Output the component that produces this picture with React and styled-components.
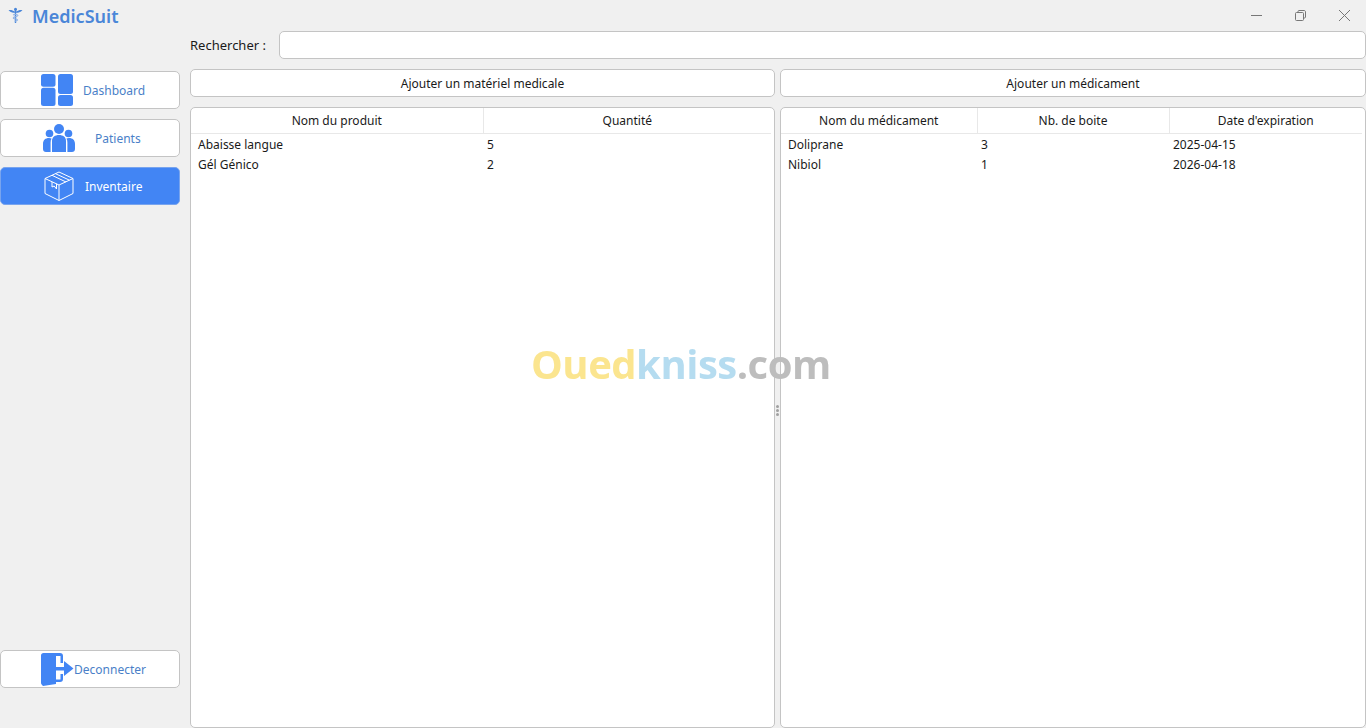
import React from "react";
import styled, { createGlobalStyle } from "styled-components";

const GlobalStyle = createGlobalStyle`
  html, body { margin: 0; padding: 0; height: 100%; overflow: hidden; }
  body { background: #f0f0f0; font-family: "Noto Sans", "Open Sans", sans-serif; color: #1a1a1a; }
  * { box-sizing: border-box; }
`;

const Window = styled.div`
  position: relative;
  width: 1366px;
  height: 728px;
  display: flex;
  flex-direction: column;
  overflow: hidden;
`;

const TitleBar = styled.div`
  height: 31px;
  flex: none;
  display: flex;
  align-items: center;
  justify-content: space-between;
  padding-left: 8px;
`;

const Brand = styled.div`
  display: flex;
  align-items: center;
  gap: 9px;
  color: #4a86d8;
  font-size: 18px;
  font-weight: 600;
`;

const WindowControls = styled.div`
  display: flex;
  padding-right: 0;
`;

const WindowButton = styled.button`
  width: 44px;
  height: 30px;
  border: 0;
  padding: 0;
  background: none;
  display: flex;
  align-items: center;
  justify-content: center;
`;

const Body = styled.div`
  flex: 1;
  min-height: 0;
  display: grid;
  grid-template-columns: 180px 1fr;
  column-gap: 10px;
`;

const Sidebar = styled.nav`
  display: flex;
  flex-direction: column;
  gap: 10px;
  padding: 40px 0 40px;
`;

const NavButton = styled.button`
  height: 38px;
  width: 180px;
  flex: none;
  margin-top: ${(p) => (p.$bottom ? "auto" : "0")};
  display: flex;
  align-items: center;
  padding: 0 0 0 ${(p) => p.$inset}px;
  gap: ${(p) => p.$gap}px;
  border-radius: 5px;
  border: 1px solid ${(p) => (p.$active ? "#78a4ee" : "#c4c4c4")};
  background: ${(p) => (p.$active ? "#4285f4" : "#fff")};
  color: ${(p) => (p.$active ? "#fff" : "#4a7fc8")};
  font: 12px "Noto Sans", sans-serif;
`;

const Main = styled.main`
  display: flex;
  flex-direction: column;
  min-width: 0;
`;

const SearchRow = styled.div`
  height: 28px;
  flex: none;
  display: flex;
  align-items: center;
  gap: 13px;
  margin-bottom: 10px;
  font-size: 13px;
`;

const SearchInput = styled.input`
  flex: 1;
  height: 28px;
  border: 1px solid #c4c4c4;
  border-radius: 5px;
  background: #fff;
`;

const Split = styled.div`
  flex: 1;
  min-height: 0;
  display: grid;
  grid-template-columns: 585px 5px 586px;
`;

const Column = styled.section`
  display: flex;
  flex-direction: column;
  gap: 10px;
  min-height: 0;
`;

const AddButton = styled.button`
  height: 28px;
  flex: none;
  border: 1px solid #c4c4c4;
  border-radius: 5px;
  background: #fff;
  color: #1a1a1a;
  font: 12px "Noto Sans", sans-serif;
`;

const TablePanel = styled.div`
  flex: 1;
  background: #fff;
  border: 1px solid #c4c4c4;
  border-radius: 5px;
  padding: 0 3px 0 0;
`;

const Table = styled.table`
  width: 100%;
  border-collapse: collapse;
  table-layout: fixed;
  font-size: 12px;
`;

const HeadCell = styled.th`
  width: ${(p) => p.$width}px;
  height: 25px;
  padding: 0;
  font-weight: 400;
  text-align: center;
  border-bottom: 1px solid #e8e8e8;
  border-right: 1px solid #e8e8e8;
  &:last-child { border-right: 0; }
`;

const Cell = styled.td`
  height: 20px;
  padding: 0 0 0 7px;
  &:not(:first-child) { padding-left: 4px; }
`;

const FirstRowSpacer = styled.tr`
  height: 1px;
`;

const Splitter = styled.div`
  display: flex;
  flex-direction: column;
  align-items: center;
  justify-content: center;
  gap: 1px;
  padding-top: 24px;
`;

const SplitterDot = styled.span`
  width: 3px;
  height: 3px;
  border-radius: 50%;
  background: #a0a0a0;
`;

// stock-photo style stamp laid over the whole window
const Watermark = styled.div`
  position: absolute;
  left: 531px;
  top: 339px;
  font: 700 40px/50px "Open Sans", sans-serif;
  letter-spacing: -0.5px;
  pointer-events: none;
  filter: blur(0.7px);
`;

const Mark = styled.span`
  color: ${(p) => p.$color};
`;

const CaduceusIcon = () => (
  <svg width="15" height="17" viewBox="0 0 15 17" fill="none">
    <path d="M0.5 3 C3 2.6 5 3.2 6.8 4.6 L8.2 4.6 C10 3.2 12 2.6 14.5 3 C12.6 5.4 10.4 5.8 8.2 5.8 L6.8 5.8 C4.6 5.8 2.4 5.4 0.5 3Z" fill="#4a86d8" />
    <circle cx="7.5" cy="2.2" r="1.5" fill="#4a86d8" />
    <path d="M7.5 3 V16" stroke="#4a86d8" strokeWidth="1.4" />
    <path d="M5 8 C7 7 9.6 7.4 10 8.4 C10.2 9.6 5.4 9.6 5.2 11 C5.2 12.2 9.6 11.6 9.6 13 C9.4 14 7.6 14 6.6 14.2" stroke="#8fb3e6" strokeWidth="1.1" />
  </svg>
);

const DashboardIcon = () => (
  <svg width="32" height="32" viewBox="0 0 32 32" fill="#4285f4">
    <rect x="0" y="0" width="14.5" height="12.8" rx="2.5" />
    <rect x="0" y="13.8" width="14.5" height="18.2" rx="2.5" />
    <rect x="17" y="0" width="15" height="20" rx="2.5" />
    <rect x="17" y="21" width="15" height="11" rx="2.5" />
  </svg>
);

const PatientsIcon = () => (
  <svg width="32" height="28" viewBox="0 0 32 28" fill="#4285f4">
    <circle cx="16" cy="5" r="5" />
    <circle cx="6.5" cy="9.5" r="3.8" />
    <circle cx="25.5" cy="9.5" r="3.8" />
    <path d="M9 28 V17 C9 13 12 11 16 11 C20 11 23 13 23 17 V28 Z" />
    <path d="M7.6 28 H3 C1.2 28 0 26.8 0 25 V20 C0 16 2.4 14 6 14 C7 14 8 14.2 8.6 14.6 C7.9 15.8 7.6 17 7.6 18.4 Z" />
    <path d="M24.4 28 H29 C30.8 28 32 26.8 32 25 V20 C32 16 29.6 14 26 14 C25 14 24 14.2 23.4 14.6 C24.1 15.8 24.4 17 24.4 18.4 Z" />
  </svg>
);

const BoxIcon = () => (
  <svg width="30" height="30" viewBox="0 0 30 30" fill="none" stroke="#fff" strokeWidth="1" strokeLinejoin="round">
    <path d="M15 1 L29 7.5 V22.5 L15 29.5 L1 22.5 V7.5 Z" />
    <path d="M1 7.5 L15 14 L29 7.5" />
    <path d="M15 14 V29.5" />
    <path d="M8 4.3 L22 11 M11.5 2.7 L25.5 9.2" />
    <path d="M8 11 V16 L10.2 15 L12.5 18 V12.8" />
  </svg>
);

const LogoutIcon = () => (
  <svg width="33" height="33" viewBox="0 0 33 33" fill="#4285f4">
    <path d="M0 2.5 C0 1 1 0 2.5 0 H19 C21 0 22 1 22 3 V10 H19.5 V3 H15 V31 L2 33 C1 32 0 31 0 30 Z" />
    <path d="M19.5 21 H22 V26 C22 28 21 29 19 29 H15 V26.5 H19.5 Z" />
    <path d="M15 14 H23 V8 L32.5 15.5 L23 23 V17.5 H15 Z" />
  </svg>
);

const materiel = [
  ["Abaisse langue", "5"],
  ["Gél Génico", "2"],
];

const medicaments = [
  ["Doliprane", "3", "2025-04-15"],
  ["Nibiol", "1", "2026-04-18"],
];

function DataTable({ columns, rows }) {
  return (
    <Table>
      <thead>
        <tr>
          {columns.map((c) => (
            <HeadCell key={c.label} $width={c.width}>{c.label}</HeadCell>
          ))}
        </tr>
        <FirstRowSpacer />
      </thead>
      <tbody>
        {rows.map((r) => (
          <tr key={r[0]}>
            {r.map((v) => (
              <Cell key={v}>{v}</Cell>
            ))}
          </tr>
        ))}
      </tbody>
    </Table>
  );
}

export default function App() {
  return (
    <Window>
      <GlobalStyle />
      <TitleBar>
        <Brand>
          <CaduceusIcon />
          MedicSuit
        </Brand>
        <WindowControls>
          <WindowButton>
            <svg width="11" height="11" viewBox="0 0 11 11"><path d="M0 5.5 H11" stroke="#777" /></svg>
          </WindowButton>
          <WindowButton>
            <svg width="11" height="11" viewBox="0 0 11 11" fill="none" stroke="#777">
              <rect x="0.5" y="2.5" width="8" height="8" rx="1" />
              <path d="M3 2.5 V1.5 C3 1 3.4 0.5 4 0.5 H9 C10 0.5 10.5 1 10.5 2 V7 C10.5 7.6 10 8 9.5 8 H8.5" />
            </svg>
          </WindowButton>
          <WindowButton>
            <svg width="11" height="11" viewBox="0 0 11 11" stroke="#777"><path d="M0 0 L11 11 M11 0 L0 11" /></svg>
          </WindowButton>
        </WindowControls>
      </TitleBar>
      <Body>
        <Sidebar>
          <NavButton $inset={40} $gap={10}>
            <DashboardIcon />
            Dashboard
          </NavButton>
          <NavButton $inset={42} $gap={20}>
            <PatientsIcon />
            Patients
          </NavButton>
          <NavButton $active $inset={43} $gap={11}>
            <BoxIcon />
            Inventaire
          </NavButton>
          <NavButton $bottom $inset={40} $gap={0}>
            <LogoutIcon />
            Deconnecter
          </NavButton>
        </Sidebar>
        <Main>
          <SearchRow>
            Rechercher :
            <SearchInput />
          </SearchRow>
          <Split>
            <Column>
              <AddButton>Ajouter un matériel medicale</AddButton>
              <TablePanel>
                <DataTable
                  columns={[{ label: "Nom du produit", width: 292 }, { label: "Quantité" }]}
                  rows={materiel}
                />
              </TablePanel>
            </Column>
            <Splitter>
              <SplitterDot />
              <SplitterDot />
              <SplitterDot />
            </Splitter>
            <Column>
              <AddButton>Ajouter un médicament</AddButton>
              <TablePanel>
                <DataTable
                  columns={[
                    { label: "Nom du médicament", width: 196 },
                    { label: "Nb. de boite", width: 192 },
                    { label: "Date d'expiration" },
                  ]}
                  rows={medicaments}
                />
              </TablePanel>
            </Column>
          </Split>
        </Main>
      </Body>
      <Watermark>
        <Mark $color="#fbe58f">Oued</Mark>
        <Mark $color="#b5dcf0">kniss</Mark>
        <Mark $color="#bdbdbd">.com</Mark>
      </Watermark>
    </Window>
  );
}
